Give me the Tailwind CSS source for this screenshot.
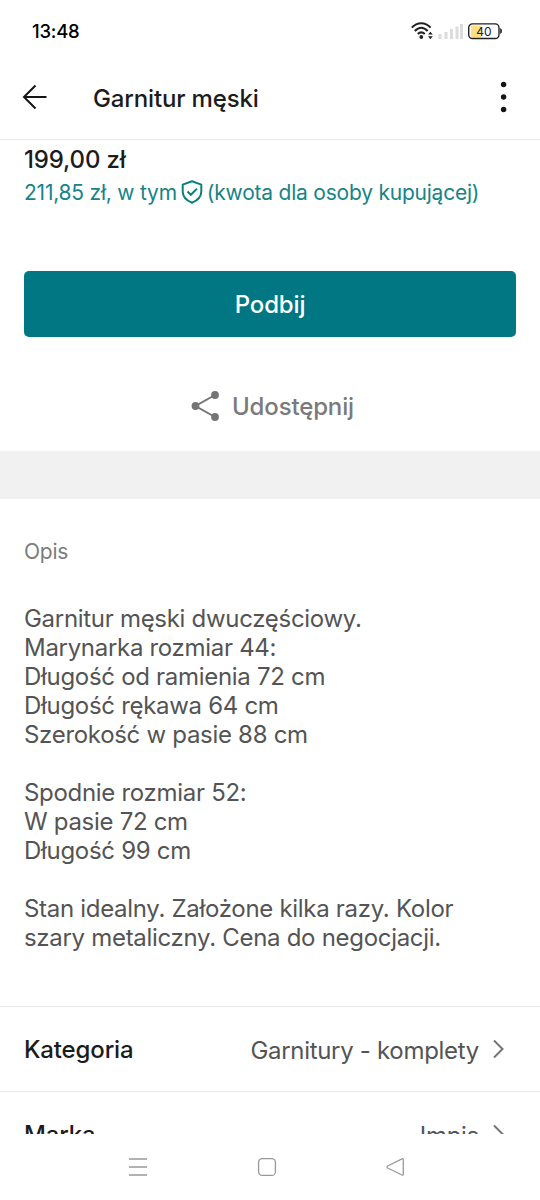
<!DOCTYPE html>
<html lang="pl">
<head>
<meta charset="utf-8">
<title>Garnitur męski</title>
<script src="https://cdn.jsdelivr.net/npm/@tailwindcss/browser@4"></script>
</head>
<body class="bg-white">
<div class="w-[540px] h-[1200px] overflow-hidden flex flex-col bg-white font-['Inter',sans-serif] text-[#1c1c1c]">
  <div class="h-[56px] shrink-0 flex items-center justify-between pl-8 pr-[37px] pt-[6px]">
    <span class="text-[18.5px] leading-6 font-medium tracking-[-0.25px] text-black">13:48</span>
    <svg class="w-[92px] h-[20px]" viewBox="0 0 92 20" fill="none">
      <g stroke="#222" stroke-width="2.1">
        <path d="M0.8 6.6C6.2 .7 14.2 .7 19.6 6.6"/>
        <path d="M3.8 10C8 5.6 12.5 5.6 16.7 10"/>
        <path d="M6.8 13C9 10.8 11.5 10.8 13.8 13"/>
      </g>
      <circle cx="10.3" cy="16" r="1.9" fill="#222"/>
      <path d="M17 13.6L19.4 10.7L21.8 13.6ZM17 15.3L19.4 18.2L21.8 15.3Z" fill="#222"/>
      <path d="M28 13h3v5h-3zM34 11h3v7h-3zM39.5 8h3v10h-3zM45 5.5h3v12.5h-3zM49.5 3h3v15h-3z" transform="translate(-.5 0)" fill="#dcdcdc"/>
      <path d="M60 4.5h10v12H60z" fill="#ffdf80"/>
      <rect x="57.7" y="2.9" width="30.3" height="14.6" rx="3.8" stroke="#222" stroke-width="1.4"/>
      <path d="M89.2 7v6q1.8-.5 1.8-3t-1.8-3z" fill="#222"/>
      <text x="72.8" y="14.5" text-anchor="middle" font-family="Inter" font-size="12" fill="#222">40</text>
    </svg>
  </div>

  <header class="h-[84px] shrink-0 flex items-center border-b-[1.5px] border-[#e8e8e8] pl-[22px] pr-[32px]">
    <svg class="w-[26px] h-[26px] mb-[2px]" viewBox="0 0 26 26" fill="none" stroke="#151515" stroke-width="2"><path d="M24.5 13H2M13.5 1.5L2 13L13.5 24.5"/></svg>
    <h1 class="ml-[45px] pt-px text-[24px] leading-[29px] font-medium tracking-[-0.15px] whitespace-nowrap">Garnitur męski</h1>
    <svg class="ml-auto mb-[2px] w-[8px] h-[32px]" viewBox="0 0 8 32" fill="#151515"><circle cx="3.6" cy="3.5" r="2.7"/><circle cx="3.6" cy="16" r="2.7"/><circle cx="3.6" cy="28.5" r="2.7"/></svg>
  </header>

  <main class="h-[994px] shrink-0 overflow-hidden flex flex-col">
    <section class="h-[131px] shrink-0 px-6 pt-[5px]">
      <p class="text-[24px] leading-[29px] font-medium tracking-[-0.15px]">199,00 zł</p>
      <div class="mt-[4px] flex items-center text-[21px] leading-[26px] tracking-[-0.22px] text-[#178486] whitespace-nowrap">
        <span class="pt-[2px]">211,85 zł, w tym</span>
        <svg class="mx-[4px] w-[22px] h-[24px] shrink-0" viewBox="0 0 22 24" fill="none" stroke="#0c7e80" stroke-width="2"><path stroke-linejoin="round" d="M11 1.3L20.3 4.6V11.5C20.3 17 16 20.7 11 22.7C6 20.7 1.7 17 1.7 11.5V4.6Z"/><path d="M6.5 11.5L9.8 14.8L16 8.6"/></svg>
        <span class="pt-[2px]">(kwota dla osoby kupującej)</span>
      </div>
    </section>
    <button class="mx-6 h-[66px] shrink-0 rounded-[5px] bg-[#007782] text-[24px] leading-[29px] font-medium tracking-[-0.15px] text-white">Podbij</button>
    <div class="mt-[54px] h-[30px] shrink-0 flex items-center pl-[191px] text-[24px] leading-[29px] font-medium tracking-[-0.15px] text-[#7a7a7a]">
      <svg class="w-[29px] h-[32px]" viewBox="0 0 29 32" fill="#757575" stroke="#757575" stroke-width="2"><path d="M24 5L4.5 16L24 27" fill="none"/><circle cx="24" cy="5" r="2.9"/><circle cx="4.5" cy="16" r="2.9"/><circle cx="24" cy="27" r="2.9"/></svg>
      <span class="ml-[12px]">Udostępnij</span>
    </div>
    <div class="mt-[30px] h-[48px] shrink-0 bg-[#f1f1f1]"></div>
    <section class="h-[507px] shrink-0 px-6 pt-[40px]">
      <h2 class="text-[21px] leading-[26px] tracking-[-0.22px] text-[#7c7c7c]">Opis</h2>
      <p class="mt-[39px] text-[24px] leading-[29px] tracking-[-0.3px] text-[#545454] whitespace-nowrap">Garnitur męski dwuczęściowy.<br>Marynarka rozmiar 44:<br>Długość od ramienia 72 cm<br>Długość rękawa 64 cm<br>Szerokość w pasie 88 cm<br><br>Spodnie rozmiar 52:<br>W pasie 72 cm<br>Długość 99 cm<br><br>Stan idealny. Założone kilka razy. Kolor<br>szary metaliczny. Cena do negocjacji.</p>
    </section>
    <div class="h-[85px] shrink-0 flex items-center border-t-[1.5px] border-[#e8e8e8] pl-6 pr-[35px] text-[24px] leading-[29px]">
      <span class="font-medium tracking-[-0.15px]">Kategoria</span>
      <span class="ml-auto pt-[2px] tracking-[-0.3px] text-[#545454]">Garnitury - komplety</span>
      <svg class="ml-[13px] w-[13px] h-[20px]" viewBox="0 0 13 20" fill="none" stroke="#757575" stroke-width="2"><path d="M2 1.5L10.5 10L2 18.5"/></svg>
    </div>
    <div class="h-[85px] shrink-0 flex items-center border-t-[1.5px] border-[#e8e8e8] pl-6 pr-[35px] text-[24px] leading-[29px]">
      <span class="font-medium tracking-[-0.15px]">Marka</span>
      <span class="ml-auto pt-[2px] tracking-[-0.3px] text-[#545454]">Impis</span>
      <svg class="ml-[13px] w-[13px] h-[20px]" viewBox="0 0 13 20" fill="none" stroke="#757575" stroke-width="2"><path d="M2 1.5L10.5 10L2 18.5"/></svg>
    </div>
  </main>

  <nav class="h-[66px] shrink-0 flex items-center pl-[128px] gap-[109px]">
    <svg class="w-[20px] h-[20px]" viewBox="0 0 20 20" stroke="#999" stroke-width="1.5"><path d="M1 2h18M1 10h18M1 18h18"/></svg>
    <svg class="w-[20px] h-[20px]" viewBox="0 0 20 20" fill="none" stroke="#999" stroke-width="1.3"><rect x="1.6" y="1.6" width="16.8" height="16.8" rx="3.5"/></svg>
    <svg class="w-[20px] h-[20px]" viewBox="0 0 20 20" fill="none" stroke="#999" stroke-width="1.3" stroke-linejoin="round"><path d="M1.6 9L16 1.9q1.3-.5 1.3 1V17q0 1.5-1.3 1L1.6 11q-1.3-1 0-2z"/></svg>
  </nav>
</div>
</body>
</html>
